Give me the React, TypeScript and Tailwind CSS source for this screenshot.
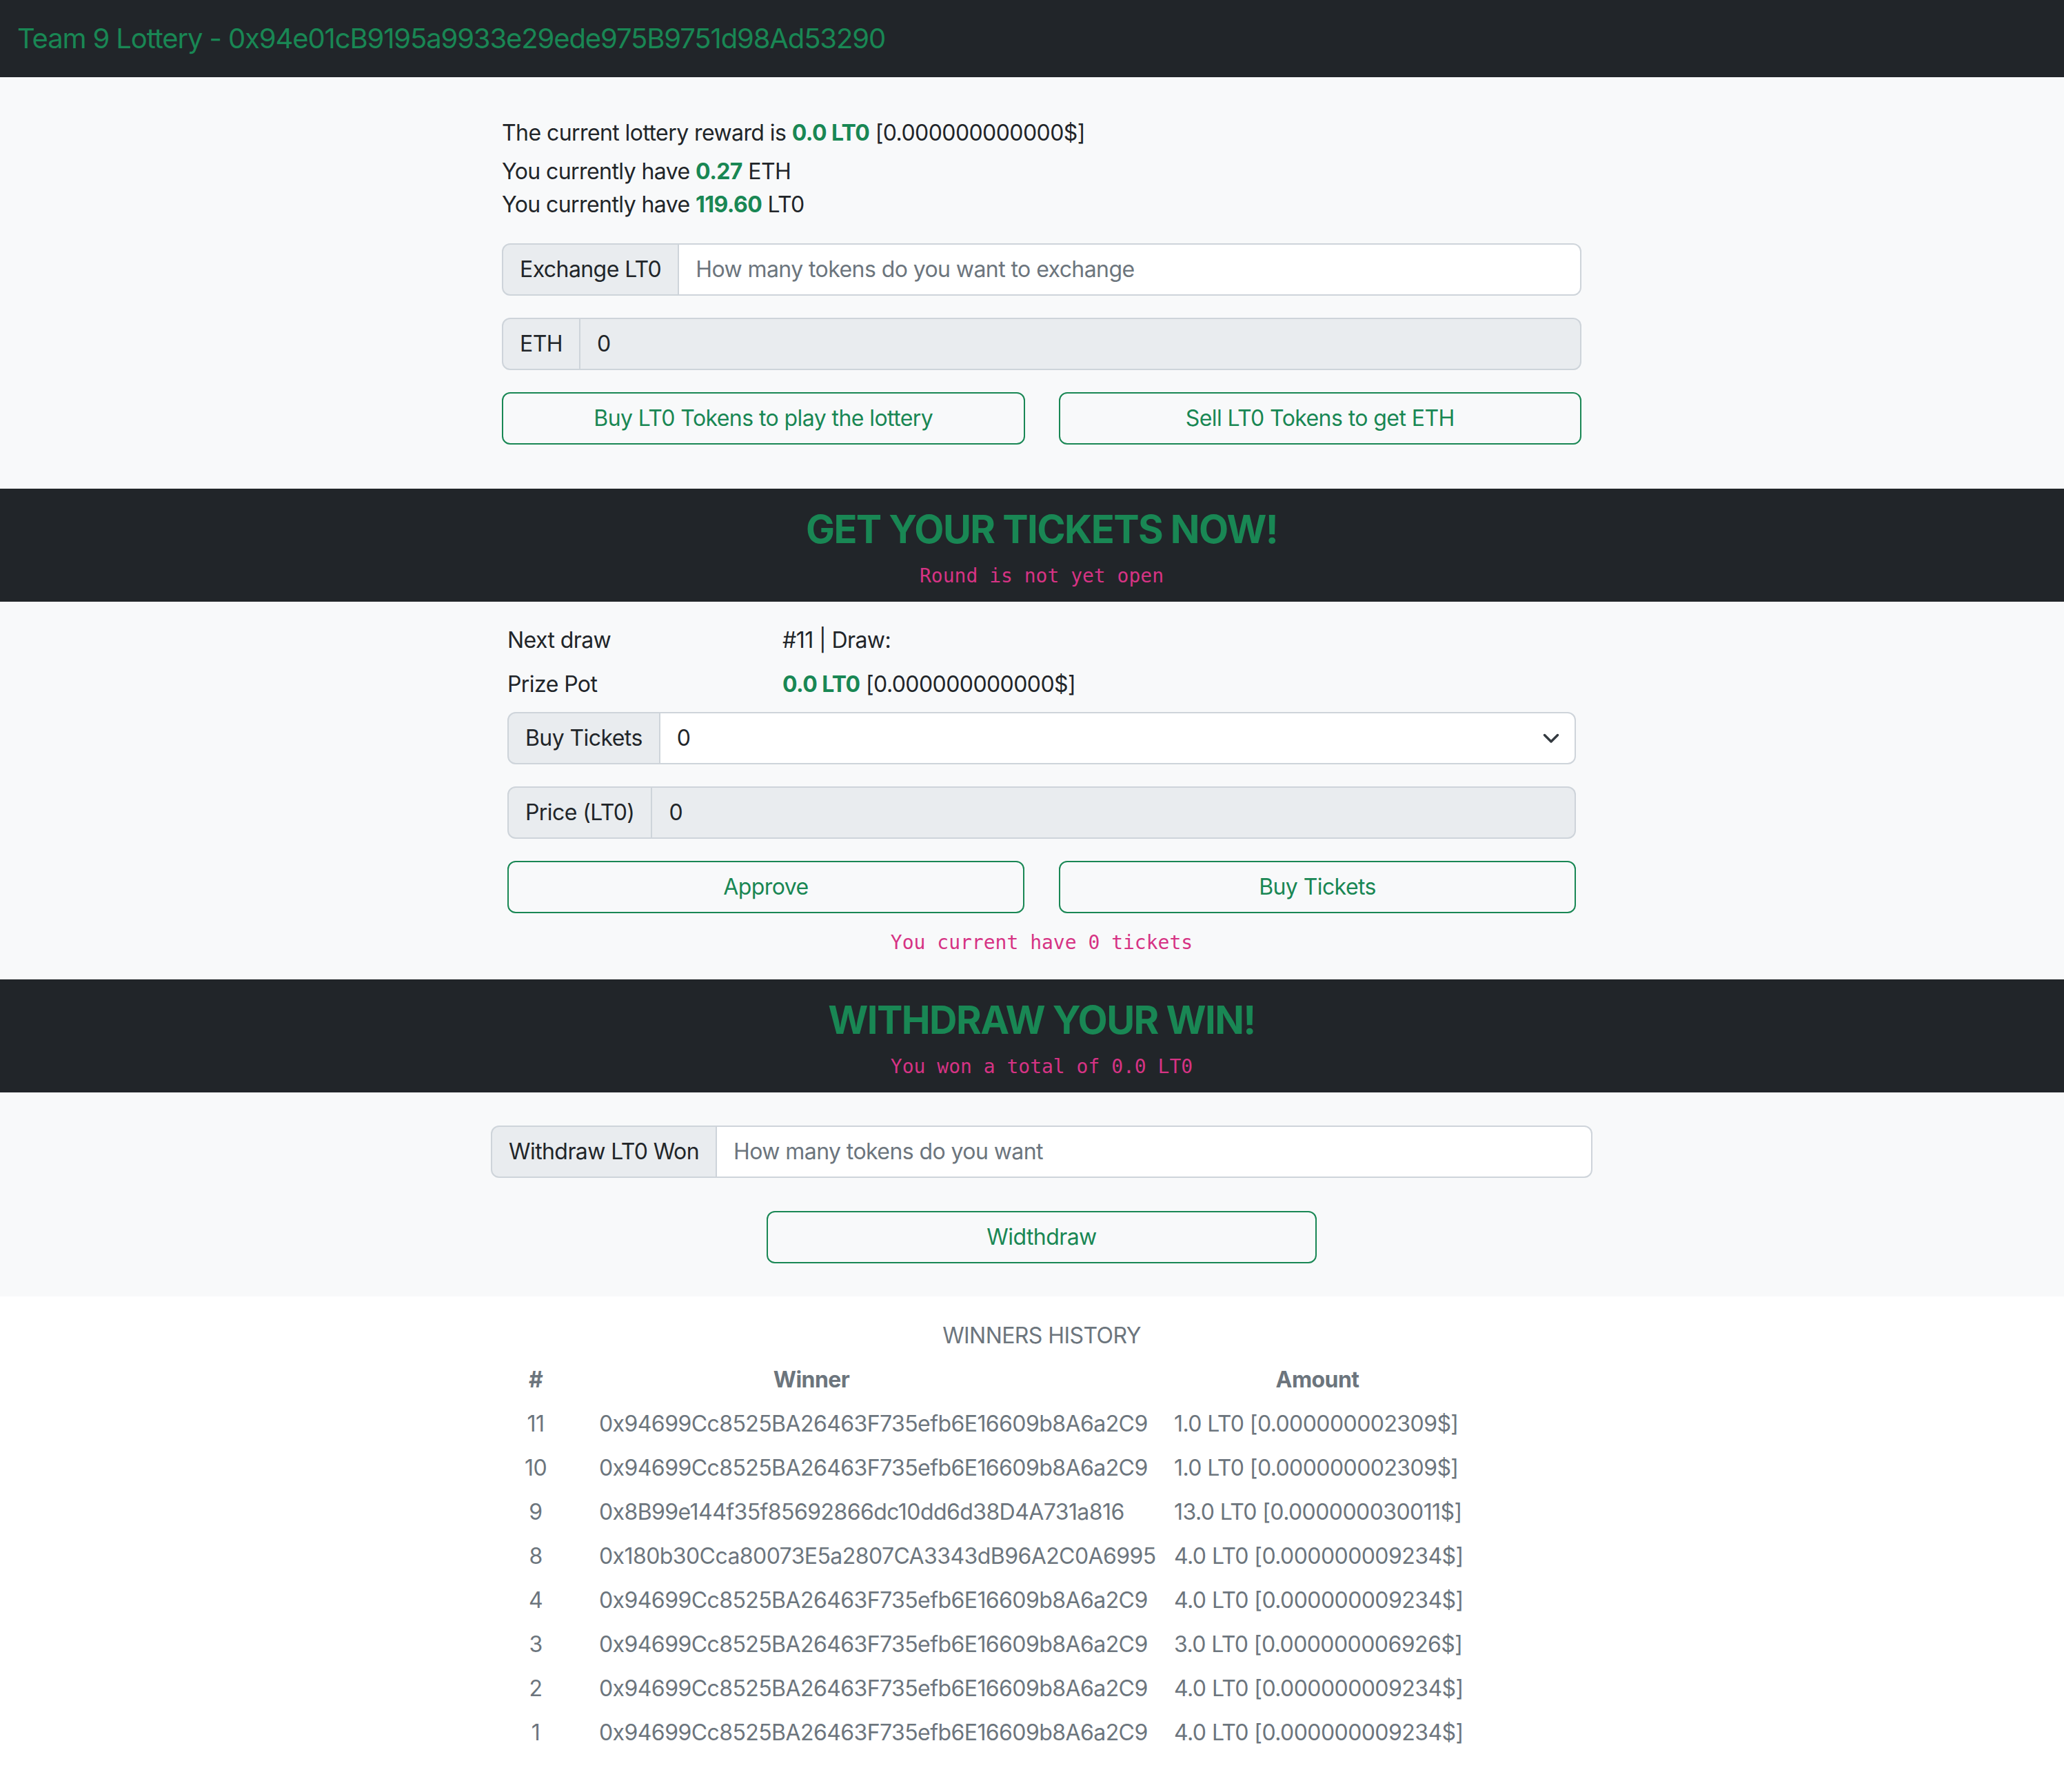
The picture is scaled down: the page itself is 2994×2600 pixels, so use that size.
import React from "react";

const ADDR = "0x94699Cc8525BA26463F735efb6E16609b8A6a2C9";

const WINNERS = [
  { id: "11", winner: ADDR, amount: "1.0 LT0 [0.000000002309$]" },
  { id: "10", winner: ADDR, amount: "1.0 LT0 [0.000000002309$]" },
  { id: "9", winner: "0x8B99e144f35f85692866dc10dd6d38D4A731a816", amount: "13.0 LT0 [0.000000030011$]" },
  { id: "8", winner: "0x180b30Cca80073E5a2807CA3343dB96A2C0A6995", amount: "4.0 LT0 [0.000000009234$]" },
  { id: "4", winner: ADDR, amount: "4.0 LT0 [0.000000009234$]" },
  { id: "3", winner: ADDR, amount: "3.0 LT0 [0.000000006926$]" },
  { id: "2", winner: ADDR, amount: "4.0 LT0 [0.000000009234$]" },
  { id: "1", winner: ADDR, amount: "4.0 LT0 [0.000000009234$]" },
];

function InputGroup({ label, children, filled }: { label: string; children: React.ReactNode; filled?: boolean }) {
  return (
    <div className="flex h-[76px]">
      <span className="flex items-center px-[24px] whitespace-nowrap bg-[#e9ecef] border-2 border-[#ced4da] rounded-l-[12px]">
        {label}
      </span>
      <div
        className={`flex-1 flex items-center px-[24px] border-2 border-l-0 border-[#ced4da] rounded-r-[12px] ${
          filled ? "bg-[#e9ecef]" : "bg-white"
        }`}
      >
        {children}
      </div>
    </div>
  );
}

function OutlineButton({ children }: { children: React.ReactNode }) {
  return (
    <button className="h-[76px] w-full flex items-center justify-center border-2 border-[#198754] rounded-[12px] text-[#198754] bg-transparent">
      {children}
    </button>
  );
}

function Band({ title, note }: { title: string; note: string }) {
  return (
    <section className="bg-[#212529] pl-[28px] pt-[26px] pb-[13px] text-center">
      <h3 className="text-[56px] leading-[67px] font-bold tracking-[-0.028em] text-[#198754]">{title}</h3>
      <p className="mt-[10px] font-['DejaVu_Sans_Mono',monospace] text-[28px] leading-[48px] tracking-normal text-[#d63384]">
        {note}
      </p>
    </section>
  );
}

export default function App() {
  return (
    <div className="w-full bg-white font-['Inter',sans-serif] text-[32px] leading-[48px] tracking-[-0.018em] text-[#212529]">
      {/* navbar */}
      <nav className="h-[112px] bg-[#212529] flex items-center px-[25px]">
        <span className="text-[40px] leading-[60px] tracking-[-0.028em] text-[#198754]">
          Team 9 Lottery - 0x94e01cB9195a9933e29ede975B9751d98Ad53290
        </span>
      </nav>

      {/* exchange */}
      <section className="bg-[#f8f9fa] pl-[28px] pt-[57px] pb-[64px]">
        <div className="mx-auto w-[1566px]">
          <p className="mb-[8px]">
            The current lottery reward is <b className="text-[#198754]">0.0 LT0</b> [0.000000000000$]
          </p>
          <p>
            You currently have <b className="text-[#198754]">0.27</b> ETH
          </p>
          <p>
            You currently have <b className="text-[#198754]">119.60</b> LT0
          </p>
          <div className="mt-[32px] flex flex-col gap-[32px]">
            <InputGroup label="Exchange LT0">
              <span className="text-[#6c757d]">How many tokens do you want to exchange</span>
            </InputGroup>
            <InputGroup label="ETH" filled>
              <span>0</span>
            </InputGroup>
            <div className="grid grid-cols-2 gap-[49px]">
              <OutlineButton>Buy LT0 Tokens to play the lottery</OutlineButton>
              <OutlineButton>Sell LT0 Tokens to get ETH</OutlineButton>
            </div>
          </div>
        </div>
      </section>

      <Band title="GET YOUR TICKETS NOW!" note="Round is not yet open" />

      {/* tickets */}
      <section className="bg-[#f8f9fa] pl-[28px] pt-[24px] pb-[29px]">
        <div className="mx-auto w-[1550px]">
          <div className="grid grid-cols-[399px_1fr]">
            <div className="py-[8px]">Next draw</div>
            <div className="py-[8px]">#11 | Draw:</div>
            <div className="py-[8px]">Prize Pot</div>
            <div className="py-[8px]">
              <b className="text-[#198754]">0.0 LT0</b> [0.000000000000$]
            </div>
          </div>
          <div className="mt-[8px] flex flex-col gap-[32px]">
            <InputGroup label="Buy Tickets">
              <span className="flex-1">0</span>
              <svg width="24" height="16" viewBox="0 0 24 16" className="mr-[-2px]">
                <path d="M2.5 3.5 12 13l9.5-9.5" fill="none" stroke="#343a40" strokeWidth="3.5" strokeLinecap="round" strokeLinejoin="round" />
              </svg>
            </InputGroup>
            <InputGroup label="Price (LT0)" filled>
              <span>0</span>
            </InputGroup>
            <div className="grid grid-cols-2 gap-[50px]">
              <OutlineButton>Approve</OutlineButton>
              <OutlineButton>Buy Tickets</OutlineButton>
            </div>
          </div>
          <p className="mt-[19px] text-center font-['DejaVu_Sans_Mono',monospace] text-[28px] leading-[48px] tracking-normal text-[#d63384]">
            You current have 0 tickets
          </p>
        </div>
      </section>

      <Band title="WITHDRAW YOUR WIN!" note="You won a total of 0.0 LT0" />

      {/* withdraw */}
      <section className="bg-[#f8f9fa] pl-[28px] py-[48px]">
        <div className="mx-auto w-[1598px]">
          <InputGroup label="Withdraw LT0 Won">
            <span className="text-[#6c757d]">How many tokens do you want</span>
          </InputGroup>
          <div className="mx-auto mt-[48px] w-[798px]">
            <OutlineButton>Widthdraw</OutlineButton>
          </div>
        </div>
      </section>

      {/* winners */}
      <section className="bg-white pl-[28px] pt-[33px] pb-[56px] text-[#6c757d]">
        <div className="mx-auto w-[1636px]">
          <div className="text-center">WINNERS HISTORY</div>
          <div className="mt-[8px] grid grid-cols-[168px_632px_1fr] font-bold text-center">
            <div className="py-[8px]">#</div>
            <div className="py-[8px]">Winner</div>
            <div className="py-[8px]">Amount</div>
          </div>
          {WINNERS.map((w) => (
            <div key={w.id} className="grid grid-cols-[168px_834px_1fr]">
              <div className="py-[8px] text-center">{w.id}</div>
              <div className="py-[8px] pl-[8px] whitespace-nowrap">{w.winner}</div>
              <div className="py-[8px] pl-[8px] whitespace-nowrap">{w.amount}</div>
            </div>
          ))}
        </div>
      </section>
    </div>
  );
}
